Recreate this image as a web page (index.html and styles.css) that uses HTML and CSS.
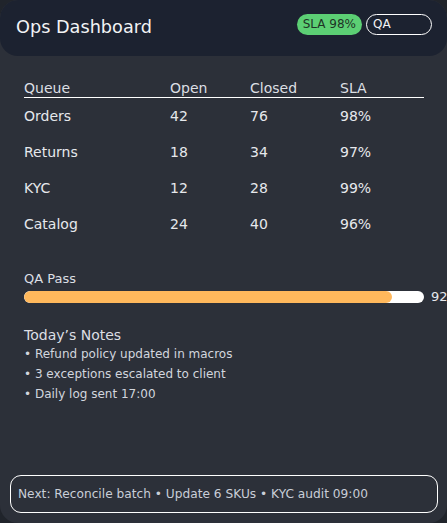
FILE: index.html
```html
<!DOCTYPE html>
<html>
<head>
<meta charset="utf-8">
<link rel="stylesheet" href="styles.css">
</head>
<body>
<div class="card">
  <header class="top">
    <h1 class="title">Ops Dashboard</h1>
    <div class="badges">
      <span class="badge sla">SLA 98%</span>
      <span class="badge qa">QA</span>
    </div>
  </header>
  <div class="content">
    <div class="table">
      <div class="row head"><span>Queue</span><span>Open</span><span>Closed</span><span>SLA</span></div>
      <div class="row"><span>Orders</span><span>42</span><span>76</span><span>98%</span></div>
      <div class="row"><span>Returns</span><span>18</span><span>34</span><span>97%</span></div>
      <div class="row"><span>KYC</span><span>12</span><span>28</span><span>99%</span></div>
      <div class="row"><span>Catalog</span><span>24</span><span>40</span><span>96%</span></div>
    </div>
    <div class="qa-label">QA Pass</div>
    <div class="bar-wrap">
      <div class="bar"><div class="fill" style="width:92%"></div></div>
      <span class="bar-val">92</span>
    </div>
    <div class="notes-title">Today’s Notes</div>
    <ul class="notes">
      <li>• Refund policy updated in macros</li>
      <li>• 3 exceptions escalated to client</li>
      <li>• Daily log sent 17:00</li>
    </ul>
  </div>
  <footer class="next">Next: Reconcile batch • Update 6 SKUs • KYC audit 09:00</footer>
</div>
</body>
</html>
```

FILE: styles.css
```css
html, body {
  margin: 0;
  padding: 0;
  background: #20242b;
}
body {
  font-family: "DejaVu Sans", sans-serif;
  color: #e4e6ea;
}
.card {
  width: 447px;
  height: 523px;
  background: #2c3039;
  border-radius: 18px;
  display: flex;
  flex-direction: column;
  overflow: hidden;
  box-sizing: border-box;
}
.top {
  height: 56px;
  background: #1c2230;
  border-radius: 18px;
  display: flex;
  align-items: center;
  justify-content: space-between;
  padding: 0 15px 0 16px;
  box-sizing: border-box;
  flex: none;
}
.title {
  margin: -3px 0 0 0;
  font-size: 17.7px;
  font-weight: normal;
  color: #f2f3f5;
  white-space: nowrap;
}
.badges {
  display: flex;
  gap: 4px;
  align-items: center;
  margin-top: -7px;
}
.badge {
  height: 21px;
  line-height: 21px;
  font-size: 12px;
  border-radius: 11px;
  box-sizing: border-box;
  white-space: nowrap;
}
.sla {
  background: #5ccf74;
  color: #1e3326;
  padding: 0 6px;
}
.qa {
  border: 1px solid #ffffff;
  color: #f2f3f5;
  width: 66px;
  padding: 0 6px;
  line-height: 19px;
}
.content {
  padding: 0 23px 0 24px;
  flex: 1;
}
.table {
  width: 400px;
  margin-top: 24px;
}
.row {
  display: grid;
  grid-template-columns: 146px 80px 90px 84px;
  height: 36px;
  align-items: center;
  font-size: 14px;
  color: #e6e8ec;
  padding-bottom: 1px;
  box-sizing: border-box;
}
.row.head {
  height: auto;
  line-height: 17px;
  padding-bottom: 0;
  border-bottom: 1px solid #ffffff;
  color: #dcdfe4;
}
.qa-label {
  margin-top: 29px;
  font-size: 13px;
  line-height: 16px;
  color: #dcdfe4;
}
.bar-wrap {
  position: relative;
  margin-top: 4px;
  width: 400px;
}
.bar {
  height: 12px;
  background: #ffffff;
  border-radius: 6px;
  overflow: hidden;
}
.fill {
  height: 100%;
  background: #ffb85c;
  border-radius: 6px;
}
.bar-val {
  position: absolute;
  left: 407px;
  top: -2px;
  font-size: 13px;
  line-height: 16px;
  color: #e6e8ec;
  white-space: nowrap;
}
.notes-title {
  margin-top: 23px;
  font-size: 14px;
  line-height: 18px;
  color: #dcdfe4;
}
.notes {
  list-style: none;
  margin: 0;
  padding: 0;
}
.notes li {
  font-size: 12px;
  line-height: 20px;
  color: #d2d6de;
}
.next {
  margin: 0 9px 10px 10px;
  height: 38px;
  border: 1px solid #ffffff;
  border-radius: 11px;
  box-sizing: border-box;
  display: flex;
  align-items: center;
  padding: 0 7px;
  font-size: 12.2px;
  color: #c9ced8;
  flex: none;
}
```
